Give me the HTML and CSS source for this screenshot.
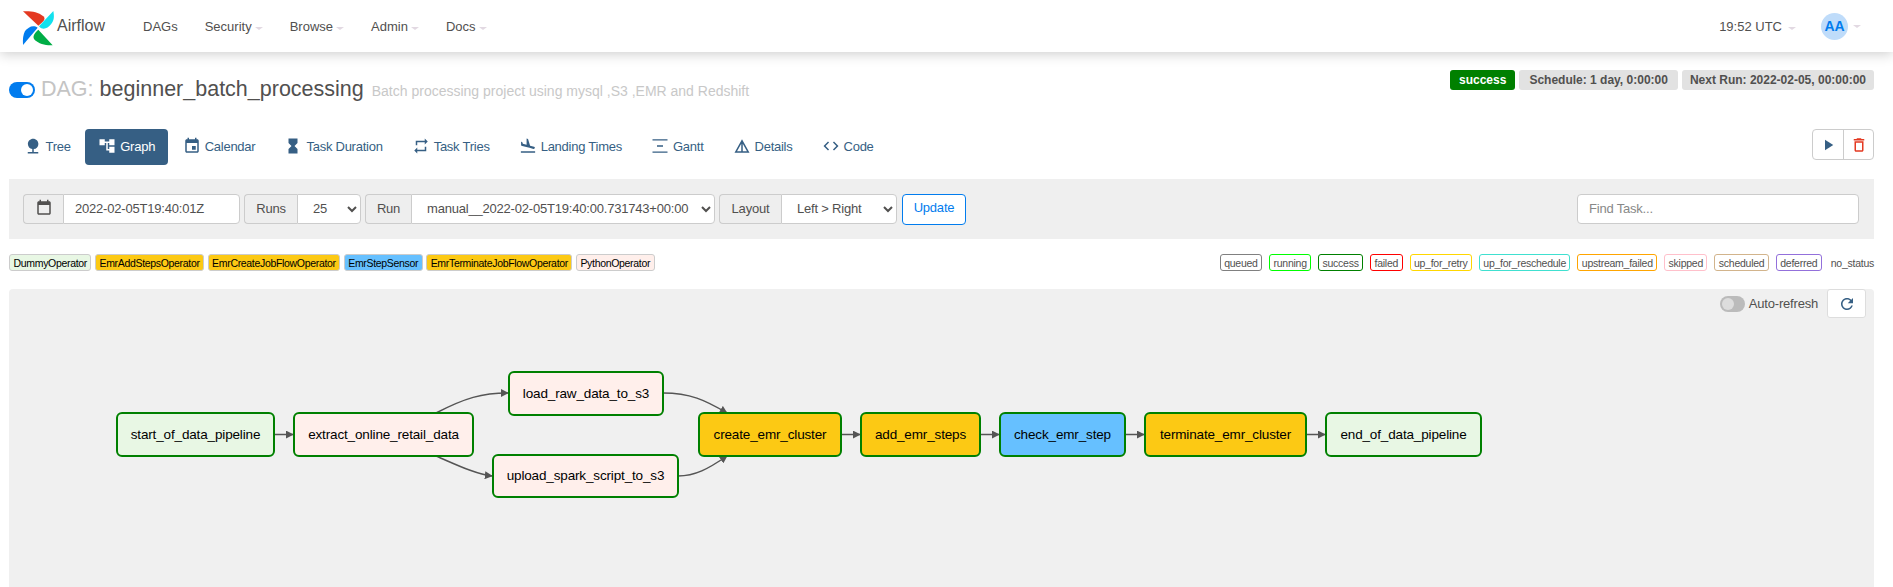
FILE: index.html
```html
<!DOCTYPE html>
<html lang="en">
<head>
  <meta charset="UTF-8">
  <title>Airflow - beginner_batch_processing</title>
  <link rel="stylesheet" href="styles.css">
</head>
<body>
  <header class="topnav">
    <a class="brand" href="#">
      <svg class="logo" viewBox="0 0 120 120">
        <path fill="#e43921" d="M24 13L70 56C84 46 94 36 85 28C68 14 48 12 24 13z"/>
        <path fill="#11e1ee" d="M115 12L72 58C84 72 98 64 108 52C118 40 118 28 115 12z"/>
        <path fill="#00ad46" d="M113 115L70 68C56 80 50 92 62 101C78 113 95 115 113 115z"/>
        <path fill="#017cee" d="M24 114L68 62C54 52 40 60 30 72C24 84 23 98 24 114z"/>
      </svg>
      <span>Airflow</span>
    </a>
    <nav class="menu">
      <a href="#">DAGs</a>
      <a href="#" class="caret">Security</a>
      <a href="#" class="caret">Browse</a>
      <a href="#" class="caret">Admin</a>
      <a href="#" class="caret">Docs</a>
    </nav>
    <div class="user-area">
      <a href="#" class="caret clock">19:52 UTC</a>
      <a href="#" class="caret avatar-link"><span class="avatar">AA</span></a>
    </div>
  </header>

  <div class="container">
    <div class="title-row">
      <h4 class="dag-title">
        <span class="pause-toggle"></span>
        <span class="dag-prefix">DAG:</span>
        <span class="dag-name">beginner_batch_processing</span>
        <small>Batch processing project using mysql ,S3 ,EMR and Redshift</small>
      </h4>
      <div class="badges">
        <span class="badge badge-success">success</span>
        <span class="badge badge-wide">Schedule: 1 day, 0:00:00</span>
        <span class="badge">Next Run: 2022-02-05, 00:00:00</span>
      </div>
    </div>

    <div class="tabs-row">
      <div class="tabs">
        <a href="#" class="tab"><svg viewBox="0 0 24 24"><path d="M13 16.12c3.47-.41 6.17-3.36 6.17-6.95 0-3.87-3.13-7-7-7s-7 3.13-7 7c0 3.47 2.52 6.34 5.83 6.89V20H5v2h14v-2h-6v-3.88z"/></svg>Tree</a>
        <a href="#" class="tab active"><svg viewBox="0 0 24 24"><path d="M22 11V3h-7v3H9V3H2v8h7V8h2v10h4v3h7v-8h-7v3h-2V8h2v3z"/></svg>Graph</a>
        <a href="#" class="tab"><svg viewBox="0 0 24 24"><path d="M17 12h-5v5h5v-5zM16 1v2H8V1H6v2H5c-1.11 0-1.99.9-1.99 2L3 19c0 1.1.89 2 2 2h14c1.1 0 2-.9 2-2V5c0-1.1-.9-2-2-2h-1V1h-2zm3 18H5V8h14v11z"/></svg>Calendar</a>
        <a href="#" class="tab"><svg viewBox="0 0 24 24"><path d="M6 2v6h.01L6 8.01 10 12l-4 4 .01.01H6V22h12v-5.99h-.01L18 16l-4-4 4-3.99-.01-.01H18V2H6z"/></svg>Task Duration</a>
        <a href="#" class="tab"><svg viewBox="0 0 24 24"><path d="M7 7h10v3l4-4-4-4v3H5v6h2V7zm10 10H7v-3l-4 4 4 4v-3h12v-6h-2v4z"/></svg>Task Tries</a>
        <a href="#" class="tab"><svg viewBox="0 0 24 24"><path d="M2.5 19h19v2h-19zm7.18-5.73l4.35 1.16 5.31 1.42c.8.21 1.62-.26 1.84-1.06.21-.8-.26-1.62-1.06-1.84l-5.31-1.42-2.76-9.02L10.12 2v8.28L5.15 8.95l-.93-2.32-1.45-.39v5.17l1.6.43 5.31 1.43z"/></svg>Landing Times</a>
        <a href="#" class="tab"><svg viewBox="0 0 24 24"><path d="M2 3h20v1.6H2zM8 11h8v2H8zM2 19.4h20V21H2z"/></svg>Gantt</a>
        <a href="#" class="tab"><svg viewBox="0 0 24 24"><path d="M12 3L2 21h20L12 3zm1 5.92L18.6 19H13V8.92zm-2 0V19H5.4L11 8.92z"/></svg>Details</a>
        <a href="#" class="tab"><svg viewBox="0 0 24 24"><path d="M9.4 16.6L4.8 12l4.6-4.6L8 6l-6 6 6 6 1.4-1.4zm5.2 0l4.6-4.6-4.6-4.6L16 6l6 6-6 6-1.4-1.4z"/></svg>Code</a>
      </div>
      <div class="actions">
        <a href="#" class="action"><svg viewBox="0 0 24 24"><path d="M8 5v14l11-7z"/></svg></a>
        <a href="#" class="action action-delete"><svg viewBox="0 0 24 24"><path d="M6 19c0 1.1.9 2 2 2h8c1.1 0 2-.9 2-2V7H6v12zM8 9h8v10H8V9zm7.5-5l-1-1h-5l-1 1H5v2h14V4z"/></svg></a>
      </div>
    </div>

    <form class="filter-bar">
      <div class="input-group">
        <span class="addon addon-cal"><svg viewBox="0 0 24 24"><path d="M19 3h-1V1h-2v2H8V1H6v2H5c-1.1 0-2 .9-2 2v14c0 1.1.9 2 2 2h14c1.1 0 2-.9 2-2V5c0-1.1-.9-2-2-2zm0 16H5V8h14v11z"/></svg></span>
        <input class="field field-date" type="text" value="2022-02-05T19:40:01Z">
      </div>
      <div class="input-group">
        <span class="addon addon-runs">Runs</span>
        <select class="field field-runs"><option>25</option></select>
      </div>
      <div class="input-group">
        <span class="addon addon-run">Run</span>
        <select class="field field-run"><option>manual__2022-02-05T19:40:00.731743+00:00</option></select>
      </div>
      <div class="input-group">
        <span class="addon addon-layout">Layout</span>
        <select class="field field-layout"><option>Left &gt; Right</option></select>
      </div>
      <button type="button" class="btn-update">Update</button>
      <input class="find-task" type="text" placeholder="Find Task...">
    </form>

    <div class="legend-row">
      <div class="legend legend-ops">
        <span class="chip op-dummy">DummyOperator</span>
        <span class="chip op-emr">EmrAddStepsOperator</span>
        <span class="chip op-emr">EmrCreateJobFlowOperator</span>
        <span class="chip op-sensor">EmrStepSensor</span>
        <span class="chip op-emr">EmrTerminateJobFlowOperator</span>
        <span class="chip op-python">PythonOperator</span>
      </div>
      <div class="legend legend-status">
        <span class="state queued">queued</span>
        <span class="state running">running</span>
        <span class="state success">success</span>
        <span class="state failed">failed</span>
        <span class="state up-for-retry">up_for_retry</span>
        <span class="state up-for-reschedule">up_for_reschedule</span>
        <span class="state upstream-failed">upstream_failed</span>
        <span class="state skipped">skipped</span>
        <span class="state scheduled">scheduled</span>
        <span class="state deferred">deferred</span>
        <span class="state state-none">no_status</span>
      </div>
    </div>

    <div class="graph-panel">
      <div class="refresh-tools">
        <span class="auto-toggle"></span>
        <span class="auto-label">Auto-refresh</span>
        <a href="#" class="refresh-btn"><svg viewBox="0 0 24 24"><path d="M17.65 6.35C16.2 4.9 14.21 4 12 4c-4.42 0-7.99 3.58-7.99 8s3.57 8 7.99 8c3.73 0 6.84-2.55 7.73-6h-2.08c-.82 2.33-3.04 4-5.65 4-3.31 0-6-2.69-6-6s2.69-6 6-6c1.66 0 3.14.69 4.22 1.78L13 11h7V4l-2.35 2.35z"/></svg></a>
      </div>
      <svg class="graph" width="1865" height="298">
        <defs>
          <marker id="arrow" viewBox="0 0 10 10" refX="9" refY="5" markerWidth="8" markerHeight="8" markerUnits="userSpaceOnUse" orient="auto">
            <path d="M0 0L10 5L0 10z" fill="#555"/>
          </marker>
        </defs>
        <!-- page coordinates, shifted to the panel corner -->
        <g transform="translate(-9 -289)">
          <g class="edges">
            <path d="M274 434.5H293" marker-end="url(#arrow)"/>
            <path d="M436 413C465 398 482 393 508 393" marker-end="url(#arrow)"/>
            <path d="M436 456C455 464 475 474 492 476" marker-end="url(#arrow)"/>
            <path d="M663 393C690 393 705 400 727 413" marker-end="url(#arrow)"/>
            <path d="M678 476C695 476 708 469 727 456" marker-end="url(#arrow)"/>
            <path d="M841 434.5H860" marker-end="url(#arrow)"/>
            <path d="M980 434.5H999" marker-end="url(#arrow)"/>
            <path d="M1125 434.5H1144" marker-end="url(#arrow)"/>
            <path d="M1306 434.5H1325" marker-end="url(#arrow)"/>
          </g>
          <g class="node op-dummy">
            <rect x="117" y="413" width="157" height="43" rx="5"/>
            <text x="195.5" y="439">start_of_data_pipeline</text>
          </g>
          <g class="node op-python">
            <rect x="294" y="413" width="179" height="43" rx="5"/>
            <text x="383.5" y="439">extract_online_retail_data</text>
          </g>
          <g class="node op-python">
            <rect x="509" y="372" width="154" height="43" rx="5"/>
            <text x="586" y="398">load_raw_data_to_s3</text>
          </g>
          <g class="node op-python">
            <rect x="493" y="455" width="185" height="42" rx="5"/>
            <text x="585.5" y="480">upload_spark_script_to_s3</text>
          </g>
          <g class="node op-emr">
            <rect x="699" y="413" width="142" height="43" rx="5"/>
            <text x="770" y="439">create_emr_cluster</text>
          </g>
          <g class="node op-emr">
            <rect x="861" y="413" width="119" height="43" rx="5"/>
            <text x="920.5" y="439">add_emr_steps</text>
          </g>
          <g class="node op-sensor">
            <rect x="1000" y="413" width="125" height="43" rx="5"/>
            <text x="1062.5" y="439">check_emr_step</text>
          </g>
          <g class="node op-emr">
            <rect x="1145" y="413" width="161" height="43" rx="5"/>
            <text x="1225.5" y="439">terminate_emr_cluster</text>
          </g>
          <g class="node op-dummy">
            <rect x="1326" y="413" width="155" height="43" rx="5"/>
            <text x="1403.5" y="439">end_of_data_pipeline</text>
          </g>
        </g>
      </svg>
    </div>
  </div>
</body>
</html>
```

FILE: styles.css
```css
* {
  box-sizing: border-box;
}
html, body {
  height: 100%;
}
body {
  margin: 0;
  display: flex;
  flex-direction: column;
  overflow: hidden;
  font-family: "Liberation Sans", Arial, sans-serif;
  font-size: 13px;
  color: #51504f;
  background: #fff;
}
a {
  color: inherit;
  text-decoration: none;
}

/* top nav */
.topnav {
  flex: none;
  height: 52px;
  display: flex;
  align-items: center;
  padding: 0 15px;
  background: #fff;
  box-shadow: 0 2px 12px rgba(0, 0, 0, 0.2);
  position: relative;
}
.brand {
  display: flex;
  align-items: center;
  font-size: 16px;
}
.logo {
  width: 40px;
  height: 40px;
  margin: 2px 2px 0 0;
}
.menu {
  display: flex;
  margin-left: 38px;
  gap: 27px;
}
.caret::after {
  content: "";
  display: inline-block;
  margin-left: 3px;
  vertical-align: 1px;
  border-top: 3px solid #e2d9e2;
  border-left: 4px solid transparent;
  border-right: 4px solid transparent;
}
.user-area {
  margin-left: auto;
  display: flex;
  align-items: center;
  gap: 25px;
  padding-right: 17px;
}
.clock::after {
  margin-left: 6px;
}
.avatar {
  display: inline-flex;
  align-items: center;
  justify-content: center;
  width: 27px;
  height: 27px;
  border-radius: 50%;
  background: #bfdcfa;
  color: #017cee;
  font-size: 14px;
  font-weight: 700;
}
.avatar-link::after {
  margin-left: 5px;
  vertical-align: 3px;
}

.container {
  flex: 1;
  min-height: 0;
  display: flex;
  flex-direction: column;
  padding: 0 19px 0 9px;
}

/* title */
.title-row {
  flex: none;
  height: 77px;
  display: flex;
  justify-content: space-between;
  align-items: flex-start;
  padding-top: 18px;
}
.dag-title {
  margin: 7px 0 0;
  display: flex;
  align-items: baseline;
  font-size: 21.5px;
  font-weight: 400;
  white-space: nowrap;
}
.pause-toggle {
  align-self: center;
  position: relative;
  width: 26px;
  height: 16px;
  margin-right: 6px;
  border-radius: 8px;
  background: #017cee;
}
.pause-toggle::after {
  content: "";
  position: absolute;
  right: 2px;
  top: 2px;
  width: 12px;
  height: 12px;
  border-radius: 50%;
  background: #fff;
}
.dag-prefix {
  color: #c4c4c4;
  margin-right: 6px;
}
.dag-title small {
  margin-left: 8px;
  font-size: 14px;
  color: #c8c8c8;
}
.badges {
  display: flex;
  gap: 4px;
}
.badge {
  height: 20px;
  padding: 0 8px;
  display: flex;
  align-items: center;
  border-radius: 3px;
  background: #e2e2e2;
  font-size: 12px;
  font-weight: 700;
}
.badge-success {
  padding: 0 9px;
  background: green;
  color: #fff;
}
.badge-wide {
  padding: 0 10px;
}

/* tabs */
.tabs-row {
  flex: none;
  height: 50px;
  display: flex;
  justify-content: space-between;
  align-items: flex-start;
}
.tabs {
  display: flex;
  letter-spacing: -0.25px;
}
.tab {
  height: 36px;
  display: flex;
  align-items: center;
  gap: 4px;
  padding: 0 14.5px 2px;
  border-radius: 4px;
  color: #365f84;
}
.tab svg {
  width: 18px;
  height: 18px;
  fill: currentColor;
}
.tab.active {
  padding: 0 13px 2px;
  background: #365f84;
  color: #fff;
}
.actions {
  display: flex;
  border: 1px solid #ccc;
  border-radius: 4px;
}
.action {
  width: 30px;
  height: 29px;
  display: flex;
  align-items: center;
  justify-content: center;
  fill: #365f84;
}
.action svg {
  width: 18px;
  height: 18px;
}
.action-delete {
  border-left: 1px solid #ccc;
  fill: #e43921;
}

/* filter bar */
.filter-bar {
  flex: none;
  height: 60px;
  display: flex;
  align-items: center;
  gap: 4px;
  padding: 0 15px 0 14px;
  background: #efefef;
  letter-spacing: -0.2px;
}
.input-group {
  display: flex;
  height: 30px;
}
.addon {
  display: flex;
  align-items: center;
  justify-content: center;
  padding-bottom: 2px;
  border: 1px solid #ccc;
  border-right: 0;
  border-radius: 4px 0 0 4px;
  background: #eee;
  font-size: 13px;
}
.addon svg {
  width: 18px;
  height: 18px;
  fill: #51504f;
}
.addon-cal { width: 40px; }
.addon-runs { width: 53px; }
.addon-run { width: 46px; }
.addon-layout { width: 62px; }
.field {
  height: 30px;
  border: 1px solid #ccc;
  border-radius: 0 4px 4px 0;
  background: #fff;
  color: #51504f;
  font-family: inherit;
  font-size: 13px;
  letter-spacing: inherit;
  padding: 0 8px 2px 11px;
}
.field-date { width: 177px; }
.field-runs { width: 64px; }
.field-run { width: 304px; }
.field-layout { width: 116px; }
.btn-update {
  width: 64px;
  height: 31px;
  margin-left: 1px;
  padding: 0 0 3px;
  border: 1px solid #017cee;
  border-radius: 4px;
  background: #fff;
  color: #017cee;
  font-family: inherit;
  font-size: 13px;
  letter-spacing: inherit;
}
.find-task {
  margin-left: auto;
  width: 282px;
  height: 30px;
  padding: 0 11px 2px;
  border: 1px solid #ccc;
  border-radius: 4px;
  font-family: inherit;
  font-size: 13px;
  letter-spacing: inherit;
}
.find-task::placeholder {
  color: #888;
}

/* legends */
.legend-row {
  flex: none;
  height: 50px;
  display: flex;
  justify-content: space-between;
  align-items: flex-start;
  padding-top: 15px;
}
.legend {
  display: flex;
  font-size: 10.5px;
}
.legend-ops {
  gap: 3.5px;
  letter-spacing: -0.32px;
}
.chip {
  height: 17px;
  padding: 0 3.5px;
  display: flex;
  align-items: center;
  border: 1px solid #ccc;
  border-radius: 3px;
  color: #000;
}
.chip.op-dummy { background: #e8f7e4; }
.chip.op-emr { background: #fcc914; }
.chip.op-sensor { background: #66c0ff; }
.chip.op-python { background: #ffefeb; }
.legend-status {
  gap: 7px;
  letter-spacing: -0.25px;
  color: #51504f;
}
.state {
  height: 17px;
  padding: 0 3.4px;
  display: flex;
  align-items: center;
  border: 1px solid;
  border-radius: 3px;
}
.queued { border-color: gray; }
.running { border-color: lime; }
.success { border-color: green; }
.failed { border-color: red; }
.up-for-retry { border-color: gold; }
.up-for-reschedule { border-color: turquoise; }
.upstream-failed { border-color: orange; }
.skipped { border-color: pink; }
.scheduled { border-color: tan; }
.deferred { border-color: mediumpurple; }
.state-none {
  border: 0;
  margin-left: 2px;
  padding: 0;
}

/* graph */
.graph-panel {
  flex: 1;
  min-height: 0;
  position: relative;
  overflow: hidden;
  border-radius: 4px 4px 0 0;
  background: #f0f0f0;
}
.graph {
  display: block;
}
.edges path {
  fill: none;
  stroke: #555;
  stroke-width: 1.5;
}
.node rect {
  stroke: green;
  stroke-width: 2;
}
.node.op-dummy rect { fill: #e8f7e4; }
.node.op-emr rect { fill: #fcc914; }
.node.op-sensor rect { fill: #66c0ff; }
.node.op-python rect { fill: #ffefeb; }
.node text {
  font-size: 13.5px;
  letter-spacing: -0.15px;
  fill: #000;
  text-anchor: middle;
}
.refresh-tools {
  position: absolute;
  top: 0;
  right: 8px;
  display: flex;
  align-items: center;
  height: 29px;
  letter-spacing: -0.2px;
}
.auto-toggle {
  position: relative;
  width: 25px;
  height: 16px;
  border-radius: 8px;
  background: #bbb;
}
.auto-toggle::after {
  content: "";
  position: absolute;
  left: 2px;
  top: 2px;
  width: 12px;
  height: 12px;
  border-radius: 50%;
  background: #ddd;
}
.auto-label {
  margin: 0 9px 0 4px;
  font-size: 13px;
}
.refresh-btn {
  width: 39px;
  height: 29px;
  display: flex;
  align-items: center;
  justify-content: center;
  background: #fff;
  border: 1px solid #ddd;
  border-radius: 3px;
  fill: #365f84;
}
.refresh-btn svg {
  width: 18px;
  height: 18px;
}
```
